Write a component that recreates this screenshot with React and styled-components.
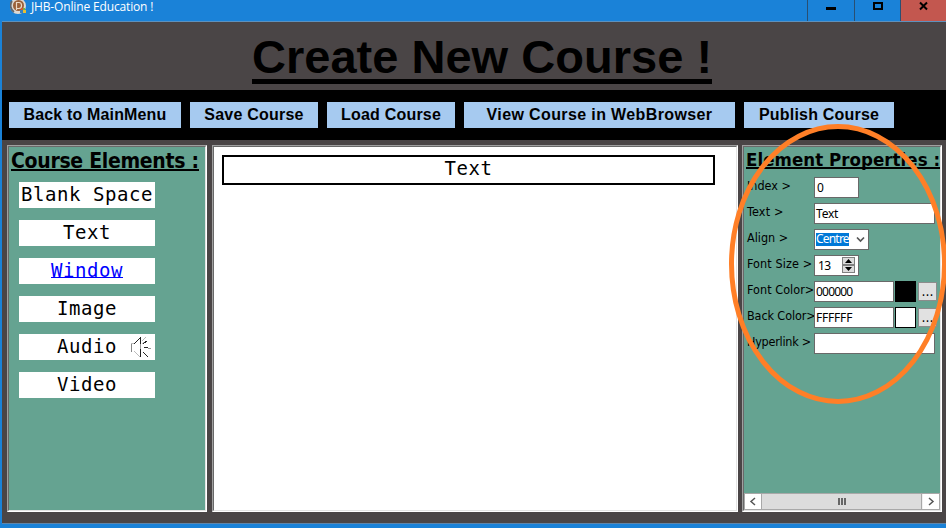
import React from 'react';
import styled, { createGlobalStyle } from 'styled-components';

const GlobalStyle = createGlobalStyle`
  * { box-sizing: border-box; }
  html, body { margin: 0; padding: 0; overflow: hidden; }
`;

const tahoma = '"DejaVu Sans Condensed", "DejaVu Sans", sans-serif';
const field = '"Noto Sans", sans-serif';

const Window = styled.div`
  position: relative;
  display: flex;
  flex-direction: column;
  width: 946px;
  height: 528px;
  overflow: hidden;
  background: #1a82d8;
  color: #000;
`;

const TitleBar = styled.header`
  display: flex;
  height: 22px;
  flex: none;
  padding-left: 10px;
`;

const AppIcon = styled.svg`
  display: block;
  width: 16px;
  height: 14px;
`;

const WindowTitle = styled.span`
  margin-left: 5px;
  flex: 1;
  height: 21px;
  font: 12px/14px "Open Sans", sans-serif;
  letter-spacing: ${(p) => p.$spacing}px;
  color: #fff;
  white-space: nowrap;
`;

const WindowControl = styled.div`
  display: flex;
  justify-content: center;
  width: ${(p) => p.$width}px;
  height: 22px;
  background: ${(p) => (p.$danger ? '#c3574f' : '#1a82d8')};
  border-left: 1px solid #294f72;
  border-bottom: 1px solid #294f72;
  svg { display: block; width: 12px; height: 12px; }
`;

const Client = styled.main`
  display: flex;
  flex-direction: column;
  flex: none;
  height: 503px;
  margin: -1px 0 0 2px;
  border-top: 1px solid #5e91bd;
  border-bottom: 1px solid #5e86ab;
  background: #4a4546;
`;

const Heading = styled.h1`
  display: flex;
  justify-content: center;
  flex: none;
  height: 68px;
  margin: 0;
  padding-left: 16px;
`;

const HeadingText = styled.span`
  height: 62px;
  border-bottom: 5px solid #000;
  font: bold 47px/70px "Liberation Sans", sans-serif;
  letter-spacing: ${(p) => p.$spacing}px;
  width: 460px;
  white-space: nowrap;
`;

const Toolbar = styled.nav`
  display: flex;
  gap: 9px;
  flex: none;
  height: 50px;
  padding: 12px 0 0 7px;
  background: #000;
`;

const ToolButton = styled.button`
  width: ${(p) => p.$width}px;
  height: 26px;
  padding: 0;
  border: 0;
  background: #a6caf0;
  font: bold 16px/26px "Liberation Sans", sans-serif;
  letter-spacing: ${(p) => p.$spacing || 0}px;
  color: #000;
  white-space: nowrap;
`;

const Workspace = styled.div`
  display: flex;
  padding: 5px 0 0 5px;
`;

const PanelFrame = styled.section`
  width: ${(p) => p.$width}px;
  height: 367px;
  margin-right: ${(p) => p.$gap || 0}px;
  border: 1px solid;
  border-color: #a0a0a0 #fff #fff #a0a0a0;
  background: ${(p) => p.$color};
`;

const PanelBody = styled.div`
  display: flex;
  flex-direction: column;
  height: 365px;
  border: 1px solid;
  border-color: #696969 #e3e3e3 #e3e3e3 #696969;
`;

const PanelTitle = styled.h2`
  flex: none;
  width: ${(p) => p.$width}px;
  height: ${(p) => p.$height}px;
  margin: 0 0 0 2px;
  border-bottom: 2px solid #000;
  font: bold ${(p) => p.$size}px/${(p) => p.$line}px ${tahoma};
  letter-spacing: ${(p) => p.$spacing}px;
  white-space: nowrap;
`;

const ElementList = styled.div`
  display: flex;
  flex-direction: column;
  gap: 12px;
  padding: 11px 0 0 10px;
`;

const ElementItem = styled.div`
  position: relative;
  width: 136px;
  height: 26px;
  background: #fff;
  color: ${(p) => (p.$link ? '#00f' : '#000')};
  font: 19px/24px "DejaVu Sans Mono", monospace;
  letter-spacing: 0.56px;
  text-align: center;
  white-space: nowrap;
  span { border-bottom: ${(p) => (p.$link ? '1px solid #00f' : '0')}; display: inline-block; height: 20px; }
`;

const Speaker = styled.svg`
  position: absolute;
  left: 111px;
  top: 1px;
  width: 22px;
  height: 24px;
`;

const TextBlock = styled.div`
  width: 493px;
  height: 30px;
  margin: 8px 0 0 8px;
  border: 2px solid #000;
  font: 19px/23px "DejaVu Sans Mono", monospace;
  letter-spacing: 0.56px;
  text-align: center;
`;

const Properties = styled.div`
  display: flex;
  flex-direction: column;
  flex: 1;
  gap: 5px;
  padding: 8px 0 0 3px;
`;

const Row = styled.div`
  display: flex;
  height: 21px;
`;

const Label = styled.label`
  width: 67px;
  flex: none;
  font: 12.5px/18px ${tahoma};
  letter-spacing: ${(p) => p.$spacing || 0}px;
  white-space: nowrap;
`;

const Field = styled.div`
  display: flex;
  align-items: center;
  width: ${(p) => p.$width}px;
  height: 21px;
  padding: 0 0 1px ${(p) => p.$inset || 1}px;
  border: 1px solid #696969;
  background: #fff;
  font: 12px/15px ${field};
  letter-spacing: ${(p) => p.$spacing || 0}px;
`;

const Selected = styled.span`
  height: 13px;
  margin-top: 1px;
  width: 33px;
  background: #0078d7;
  color: #fff;
  line-height: 12px;
  letter-spacing: -0.8px;
`;

const Chevron = styled.svg`
  width: 9px;
  height: 7px;
  margin: 1px 0 0 7px;
`;

const Spinner = styled.div`
  display: flex;
  flex-direction: column;
  margin-left: auto;
  margin-right: 3px;
  svg { display: block; width: 13px; height: 8px; background: #dcdcdc; outline: 1px solid #808080; outline-offset: -1px; }
`;

const Swatch = styled.div`
  width: 21px;
  height: 21px;
  margin-left: 1px;
  border: 1px solid #000;
  background: ${(p) => p.$color};
`;

const MoreButton = styled.button`
  width: 19px;
  height: 19px;
  margin: 1px 0 0 2px;
  padding: 0;
  border: 1px solid #8c8c8c;
  background: #e1e1e1;
  font: 14px/17px ${tahoma};
  color: #000;
`;

const Scrollbar = styled.div`
  display: flex;
  height: 17px;
  background: #f0f0f0;
  border: 1px solid #a8a8a8;
`;

const ScrollArrow = styled.div`
  display: flex;
  align-items: center;
  justify-content: center;
  width: 16px;
  background: #fff;
  svg { width: 8px; height: 9px; }
`;

const Thumb = styled.div`
  display: flex;
  align-items: center;
  justify-content: center;
  gap: 1px;
  flex: 1;
  margin-right: 1px;
  border: 1px solid #a8a8a8;
  border-width: 0 1px;
  background: #dcdcdc;
  i { width: 2px; height: 7px; background: #666; }
`;

const Annotation = styled.svg`
  position: absolute;
  left: 726px;
  top: 120px;
  width: 220px;
  height: 290px;
  pointer-events: none;
`;

const tools = [
  ['Back to MainMenu', 172, 0.15],
  ['Save Course', 128, 0.22],
  ['Load Course', 128, 0.22],
  ['View Course in WebBrowser', 271, 0.38],
  ['Publish Course', 150, 0.2],
];

const SpeakerIcon = () => (
  <Speaker viewBox="0 0 22 24" fill="none" stroke="#333" shapeRendering="crispEdges">
    <path d="M1.5 8v9" stroke="#888" />
    <path d="M1 8.5h3M4 16l6 6" stroke="#bbb" />
    <path d="M4 9l7-7M10.5 3v6M10.5 14v8" stroke="#222" />
    <path d="M10.5 9v5" stroke="#999" />
    <path d="M12 6l4-4M12 9l2-2" stroke="#bbb" />
    <path d="M13 9l4-3M13 17l5 5M14 12.5h4" stroke="#222" />
    <path d="M18 13.5h3" stroke="#999" />
  </Speaker>
);

export default function App() {
  return (
    <Window>
      <GlobalStyle />
      <TitleBar>
        <AppIcon viewBox="0 0 16 14">
          <circle cx="8" cy="6" r="8" fill="#ddd8d2" />
          <path d="M2 1a8 8 0 0 0 2 11" fill="none" stroke="#61686e" strokeWidth="1.8" />
          <circle cx="8.5" cy="5.5" r="5.5" fill="#9a6038" />
          <path d="M6.5 2v8M6.5 2.5h2.5c3.4 0 3.4 6 0 6H6.5" fill="none" stroke="#ecd9c5" strokeWidth="1.2" />
          <path d="M11 8h2v2h-2z" fill="#d85435" /><path d="M13 8h2v2h-2z" fill="#79b63c" />
          <path d="M10 10h3v3h-3z" fill="#3580c6" /><path d="M13 10h3v3h-3z" fill="#e5bf35" />
        </AppIcon>
        <WindowTitle $spacing={-0.15}>JHB-Online Education !</WindowTitle>
        <WindowControl $width={47}>
          <svg viewBox="0 0 12 12"><path d="M1 7h10v3H1z" /></svg>
        </WindowControl>
        <WindowControl $width={46}>
          <svg viewBox="0 0 12 12"><path fillRule="evenodd" d="M1 2h10v8H1zM3 4v4h6V4z" /></svg>
        </WindowControl>
        <WindowControl $width={46} $danger>
          <svg viewBox="0 0 12 12" fill="none" stroke="#000" strokeWidth="2"><path d="M2 2.5l7 7M9 2.5l-7 7" /></svg>
        </WindowControl>
      </TitleBar>
      <Client>
        <Heading><HeadingText $spacing={0.02}>Create New Course !</HeadingText></Heading>
        <Toolbar>
          {tools.map(([label, width, spacing]) => (
            <ToolButton key={label} $width={width} $spacing={spacing}>{label}</ToolButton>
          ))}
        </Toolbar>
        <Workspace>
          <PanelFrame $width={200} $gap={5} $color="#65a391">
            <PanelBody>
              <PanelTitle $width={188} $height={24} $size={21} $line={28} $spacing={-0.3}>Course Elements :</PanelTitle>
              <ElementList>
                <ElementItem><span>Blank Space</span></ElementItem>
                <ElementItem><span>Text</span></ElementItem>
                <ElementItem $link><span>Window</span></ElementItem>
                <ElementItem><span>Image</span></ElementItem>
                <ElementItem><span>Audio</span><SpeakerIcon /></ElementItem>
                <ElementItem><span>Video</span></ElementItem>
              </ElementList>
            </PanelBody>
          </PanelFrame>
          <PanelFrame $width={526} $gap={4} $color="#fff">
            <PanelBody><TextBlock>Text</TextBlock></PanelBody>
          </PanelFrame>
          <PanelFrame $width={200} $color="#65a391">
            <PanelBody>
              <PanelTitle $width={194} $height={22} $size={18.5} $line={25} $spacing={0.05}>Element Properties :</PanelTitle>
              <Properties>
                <Row><Label>Index &gt;</Label><Field $width={45} $inset={2}>0</Field></Row>
                <Row><Label $spacing={0.2}>Text &gt;</Label><Field $width={121} $spacing={-0.2}>Text</Field></Row>
                <Row>
                  <Label>Align &gt;</Label>
                  <Field $width={55}>
                    <Selected>Centre</Selected>
                    <Chevron viewBox="0 0 9 7" fill="none" stroke="#555" strokeWidth="1.7"><path d="M1 1.5l3.5 3.5L8 1.5" /></Chevron>
                  </Field>
                </Row>
                <Row>
                  <Label $spacing={0.1}>Font Size &gt;</Label>
                  <Field $width={45} $inset={3} $spacing={-0.6}>
                    13
                    <Spinner>
                      <svg viewBox="0 0 13 8"><path d="M3 6h7L6.5 2z" /></svg>
                      <svg viewBox="0 0 13 8"><path d="M3 2h7L6.5 6z" /></svg>
                    </Spinner>
                  </Field>
                </Row>
                <Row><Label $spacing={0.05}>Font Color&gt;</Label><Field $width={80} $spacing={-0.8}>000000</Field><Swatch $color="#000" /><MoreButton>...</MoreButton></Row>
                <Row><Label $spacing={-0.1}>Back Color&gt;</Label><Field $width={80} $spacing={-0.2}>FFFFFF</Field><Swatch $color="#fff" /><MoreButton>...</MoreButton></Row>
                <Row><Label $spacing={-0.25}>Hyperlink &gt;</Label><Field $width={121} /></Row>
              </Properties>
              <Scrollbar>
                <ScrollArrow><svg viewBox="0 0 8 9" fill="none" stroke="#555" strokeWidth="1.5"><path d="M6 1L2 4.5 6 8" /></svg></ScrollArrow>
                <Thumb><i /><i /><i /></Thumb>
                <ScrollArrow><svg viewBox="0 0 8 9" fill="none" stroke="#555" strokeWidth="1.5"><path d="M2 1l4 3.5L2 8" /></svg></ScrollArrow>
              </Scrollbar>
            </PanelBody>
          </PanelFrame>
        </Workspace>
      </Client>
      <Annotation viewBox="0 0 220 290" fill="none">
        <ellipse cx="112" cy="144" rx="106.5" ry="137.5" stroke="#ff7f27" strokeWidth="5" />
      </Annotation>
    </Window>
  );
}
